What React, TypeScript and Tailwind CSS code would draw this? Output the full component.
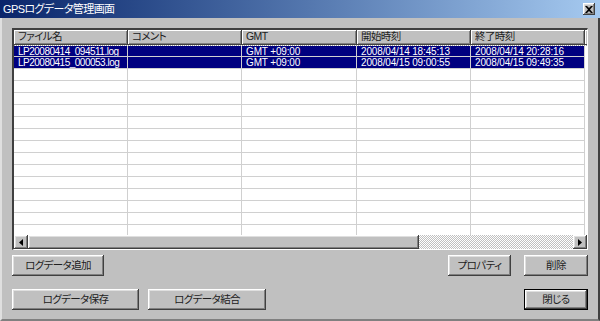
import React from "react";

const raised =
  "shadow-[inset_-1px_-1px_#404040,inset_1px_1px_#ffffff,inset_-2px_-2px_#808080,inset_2px_2px_#dfdfdf]";

const rows = [
  ["LP20080414_094511.log", "", "GMT +09:00", "2008/04/14 18:45:13", "2008/04/14 20:28:16"],
  ["LP20080415_000053.log", "", "GMT +09:00", "2008/04/15 09:00:55", "2008/04/15 09:49:35"],
];
const headers = ["ファイル名", "コメント", "GMT", "開始時刻", "終了時刻"];
const widths = ["w-[114px]", "w-[114px]", "w-[115px]", "w-[114px]", "w-[114px]"];

function Btn({ label, w, def }: { label: string; w: string; def?: boolean }) {
  return (
    <div className={`${w} h-[21px] ${def ? "border border-black" : ""}`}>
      <div className={`h-full flex items-center justify-center text-[10.5px] tracking-[-0.6px] text-[#202020] ${raised} [font-feature-settings:'palt']`}>
        {label}
      </div>
    </div>
  );
}

export default function App() {
  const all = [...rows, ...Array.from({ length: 14 }, () => ["", "", "", "", ""])];
  return (
    <div className="w-[600px] h-[321px] flex flex-col bg-[#c0c0c0] font-['Liberation_Sans','Noto_Sans_CJK_JP',sans-serif] overflow-hidden">
      {/* title bar */}
      <div className="h-[18px] shrink-0 flex items-center justify-between pl-[3px] pr-[5px] bg-gradient-to-r from-[#0a246a] to-[#a6caf0]">
        <span className="text-white text-[11px] tracking-[-0.6px] leading-none [font-feature-settings:'palt']">GPSログデータ管理画面</span>
        <div className={`w-[12px] h-[12px] bg-[#c0c0c0] ${raised} flex items-center justify-center`}>
          <svg width="8" height="7" viewBox="0 0 8 7">
            <path d="M0 0h2l2 2 2-2h2L5 3.5 8 7H6L4 5 2 7H0l3-3.5z" fill="#000" />
          </svg>
        </div>
      </div>

      {/* body */}
      <div className="flex-1 flex flex-col border-l-2 border-l-[#dfdfdf] border-r-2 border-r-[#404040] border-b-2 border-b-[#808080] pt-[10px] pl-[10px] pr-[10px]">
        {/* list view */}
        <div className="w-[576px] h-[222px] border-t-2 border-l-2 border-t-[#404040] border-l-[#404040] border-r border-b border-r-[#ffffff] border-b-[#ffffff] bg-white flex flex-col overflow-hidden">
          <div className="flex h-[15px] shrink-0 bg-[#c0c0c0]">
            {headers.map((h, i) => (
              <div
                key={h}
                className={`${widths[i]} shrink-0 h-full pl-[4px] flex items-center text-[10.5px] tracking-[-0.6px] text-[#202020] border-r border-b border-r-[#404040] border-b-[#404040] shadow-[inset_1px_1px_#ffffff,inset_-1px_-1px_#808080] [font-feature-settings:'palt']`}
              >
                {h}
              </div>
            ))}
            <div className="flex-1 h-full border-b border-b-[#404040] shadow-[inset_1px_1px_#ffffff]" />
          </div>
          <div className="flex-1 overflow-hidden">
            {all.map((r, ri) => (
              <div key={ri} className={`flex h-[12px] ${ri === 0 ? "border-t border-dotted border-t-[#a0a0a0]" : ""}`}>
                {r.map((c, ci) => (
                  <div
                    key={ci}
                    className={`${widths[ci]} shrink-0 h-full border-r border-b border-[#d0d0d0] pl-[4px] text-[10px] leading-[11px] whitespace-nowrap overflow-hidden ${
                      ci === 0 ? "tracking-[-0.5px] pl-[3px]" : "tracking-[-0.15px]"
                    } ${ri < 2 ? "bg-[#000080] text-white" : "text-black"}`}
                  >
                    {c}
                  </div>
                ))}
              </div>
            ))}
          </div>
          {/* horizontal scrollbar */}
          <div className="h-[14px] shrink-0 flex">
            <div className={`w-[14px] h-full bg-[#c0c0c0] ${raised} flex items-center justify-center`}>
              <svg width="4" height="7" viewBox="0 0 4 7"><path d="M4 0v7L0 3.5z" fill="#000" /></svg>
            </div>
            <div className={`w-[391px] h-full bg-[#c0c0c0] ${raised}`} />
            <div className="flex-1 h-full bg-[repeating-conic-gradient(#c0c0c0_0_25%,#ffffff_0_50%)] bg-[length:2px_2px]" />
            <div className={`w-[14px] h-full bg-[#c0c0c0] ${raised} flex items-center justify-center`}>
              <svg width="4" height="7" viewBox="0 0 4 7"><path d="M0 0v7l4-3.5z" fill="#000" /></svg>
            </div>
          </div>
        </div>

        {/* buttons row 1 */}
        <div className="flex items-center mt-[5px]">
          <Btn label="ログデータ追加" w="w-[92px]" />
          <div className="flex-1" />
          <Btn label="プロパティ" w="w-[63px]" />
          <div className="w-[13px]" />
          <Btn label="削除" w="w-[64px]" />
        </div>

        {/* buttons row 2 */}
        <div className="flex items-center mt-[13px]">
          <Btn label="ログデータ保存" w="w-[127px]" />
          <div className="w-[9px]" />
          <Btn label="ログデータ結合" w="w-[118px]" />
          <div className="flex-1" />
          <Btn label="閉じる" w="w-[64px]" def />
        </div>
      </div>
    </div>
  );
}
